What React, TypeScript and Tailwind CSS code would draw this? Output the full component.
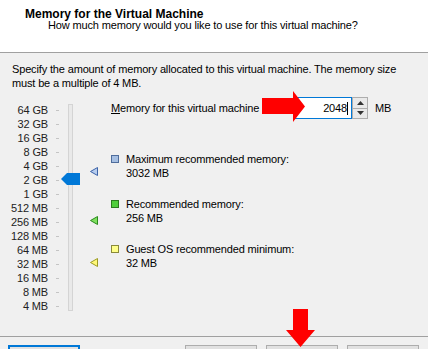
import React from "react";

const sizes = [
  "64 GB",
  "32 GB",
  "16 GB",
  "8 GB",
  "4 GB",
  "2 GB",
  "1 GB",
  "512 MB",
  "256 MB",
  "128 MB",
  "64 MB",
  "32 MB",
  "16 MB",
  "8 MB",
  "4 MB",
];

const legend = [
  { label: "Maximum recommended memory:", value: "3032 MB", box: "bg-[#a6bfe2] border-[#4f6d9c]" },
  { label: "Recommended memory:", value: "256 MB", box: "bg-[#4fce3c] border-[#2b7a1f]" },
  { label: "Guest OS recommended minimum:", value: "32 MB", box: "bg-[#ffff8a] border-[#8a8a3a]" },
];

const Marker = ({ fill, stroke, top }: { fill: string; stroke: string; top: string }) => (
  <svg className={`absolute left-[78px] ${top}`} width="9" height="9" viewBox="0 0 9 9">
    <polygon points="0.5,4.5 7.5,0.5 7.5,8.5" fill={fill} stroke={stroke} strokeWidth="1" />
  </svg>
);

const App = () => {
  return (
    <div className="relative w-[428px] h-[349px] overflow-hidden bg-[#f0f0f0] text-[11px] tracking-[-0.15px] text-black font-['Liberation_Sans',Arial,sans-serif]">
      {/* header */}
      <div className="h-[53px] bg-white border-b border-[#a0a0a0] pt-[9px] pl-[25px]">
        <div className="font-bold text-[12px] tracking-normal leading-[10px]">Memory for the Virtual Machine</div>
        <div className="pl-[23px] leading-[10px] mt-[1px]">How much memory would you like to use for this virtual machine?</div>
      </div>

      <div className="h-[283px] px-[12px] pt-[9px]">
        <p className="leading-[14px]">
          Specify the amount of memory allocated to this virtual machine. The memory size must be a multiple of 4&nbsp;MB.
        </p>

        <div className="flex mt-[7px]">
          {/* slider */}
          <div className="relative w-[88px] shrink-0 mt-[6px] flex">
            <div className="flex flex-col">
              {sizes.map((s) => (
                <div key={s} className="flex items-center h-[14px]">
                  <span className="w-[36px] shrink-0 whitespace-nowrap text-right text-[#222] leading-[14px] flex justify-end">
                    {s}
                  </span>
                  <span className="ml-[8px] w-[3px] h-px bg-[#c4c4c4]" />
                </div>
              ))}
            </div>
            <div className="ml-[9px] mt-[1px] w-[5px] h-[207px] border border-[#d4d4d4] bg-[#e9e9e9]" />
            <svg className="absolute left-[49px] top-[70px]" width="19" height="12" viewBox="0 0 19 12">
              <polygon points="0,6 6,0 19,0 19,12 6,12" fill="#0078d7" />
            </svg>
            <Marker fill="#b7cdef" stroke="#3d64a8" top="top-[64px]" />
            <Marker fill="#7fe05f" stroke="#2a8a1c" top="top-[113px]" />
            <Marker fill="#fff878" stroke="#9a9a24" top="top-[155px]" />
          </div>

          {/* right column */}
          <div className="ml-[11px] w-[288px] flex flex-col">
            <div className="flex items-center h-[22px]">
              <span className="flex-1 leading-[14px]">
                <span className="underline">M</span>emory for this virtual machine
              </span>
              <div className="w-[57px] h-[22px] border border-[#0078d7] bg-white flex items-center justify-end pr-[3px]">
                <span>2048</span>
                <span className="w-px h-[13px] bg-black" />
              </div>
              <div className="w-[16px] h-[22px] flex flex-col">
                <div className="flex-1 border border-[#adadad] bg-[#e9e9e9] flex items-center justify-center">
                  <svg width="7" height="4" viewBox="0 0 7 4">
                    <polygon points="0,4 3.5,0 7,4" fill="#333" />
                  </svg>
                </div>
                <div className="flex-1 border border-t-0 border-[#adadad] bg-[#e9e9e9] flex items-center justify-center">
                  <svg width="7" height="4" viewBox="0 0 7 4">
                    <polygon points="0,0 7,0 3.5,4" fill="#333" />
                  </svg>
                </div>
              </div>
              <span className="ml-[7px] w-[24px]">MB</span>
            </div>

            <div className="mt-[33px] flex flex-col gap-[17px]">
              {legend.map((l) => (
                <div key={l.label} className="flex">
                  <span className={`mt-[3px] w-[8px] h-[8px] border ${l.box}`} />
                  <div className="ml-[7px] leading-[14px]">
                    <div>{l.label}</div>
                    <div>{l.value}</div>
                  </div>
                </div>
              ))}
            </div>
          </div>
        </div>
      </div>

      {/* footer */}
      <div className="border-t border-[#a0a0a0] pt-[8px] px-[8px] pr-[9px] flex">
        <button className="w-[72px] h-[23px] border-2 border-[#0078d7] bg-[#e1e1e1]" />
        <div className="ml-auto flex gap-[9px]">
          <button className="w-[72px] h-[23px] border border-[#adadad] bg-[#e1e1e1]" />
          <button className="w-[72px] h-[23px] border border-[#adadad] bg-[#e1e1e1]" />
          <button className="w-[72px] h-[23px] border border-[#adadad] bg-[#e1e1e1]" />
        </div>
      </div>

      {/* annotation arrows */}
      <svg className="absolute left-[262px] top-[91px]" width="44" height="31" viewBox="0 0 44 31">
        <polygon points="0,7 31,7 31,0 43,15.5 31,31 31,23 0,23" fill="#ff0000" />
      </svg>
      <svg className="absolute left-[286px] top-[309px]" width="30" height="39" viewBox="0 0 30 39">
        <polygon points="7,0 22,0 22,21 29,21 14.5,38 0,21 7,21" fill="#ff0000" />
      </svg>
    </div>
  );
};

export default App;
